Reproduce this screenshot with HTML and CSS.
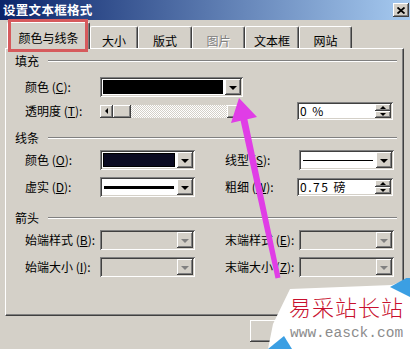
FILE: index.html
```html
<!DOCTYPE html>
<html lang="zh-CN">
<head>
    <meta charset="UTF-8">
    <title>设置文本框格式</title>
    <link rel="stylesheet" href="styles.css">
</head>
<body>
    <div class="window">
        <div class="titlebar">
            <span class="title">设置文本框格式</span>
            <span class="close">
                <svg width="8" height="7" viewBox="0 0 8 7"><path d="M0.5 0.5 L7.5 6.5 M7.5 0.5 L0.5 6.5" stroke="#000" stroke-width="1.8"/></svg>
            </span>
        </div>

        <div class="tabs">
            <div class="tab active" style="width: 83px">颜色与线条</div>
            <div class="tab" style="width: 48px">大小</div>
            <div class="tab" style="width: 54px">版式</div>
            <div class="tab disabled" style="width: 53px">图片</div>
            <div class="tab" style="width: 54px">文本框</div>
            <div class="tab" style="width: 53px">网站</div>
        </div>

        <div class="panel">
            <div class="group g-fill"><span>填充</span></div>
            <div class="row r1">
                <label>颜色 (<u>C</u>):</label>
                <div class="combo wide"><div class="value"><div class="swatch black"></div></div><span class="drop"></span></div>
            </div>
            <div class="row r2">
                <label>透明度 (<u>T</u>):</label>
                <div class="scroll">
                    <span class="sbtn left"></span>
                    <span class="thumb"></span>
                    <span class="trough"></span>
                    <span class="sbtn"></span>
                </div>
                <div class="spin"><span class="spin-text">0 %</span><span class="spin-btns"><i class="up"></i><i class="down"></i></span></div>
            </div>

            <div class="group g-line"><span>线条</span></div>
            <div class="row r3">
                <label>颜色 (<u>O</u>):</label>
                <div class="combo"><div class="value"><div class="swatch navy"></div></div><span class="drop"></span></div>
                <span></span>
                <label>线型 (<u>S</u>):</label>
                <div class="combo"><div class="value"><div class="stroke thin"></div></div><span class="drop"></span></div>
            </div>
            <div class="row r4">
                <label>虚实 (<u>D</u>):</label>
                <div class="combo"><div class="value"><div class="stroke thick"></div></div><span class="drop"></span></div>
                <span></span>
                <label>粗细 (<u>W</u>):</label>
                <div class="spin"><span class="spin-text">0.75 磅</span><span class="spin-btns"><i class="up"></i><i class="down"></i></span></div>
            </div>

            <div class="group g-arrow"><span>箭头</span></div>
            <div class="row r5">
                <label>始端样式 (<u>B</u>):</label>
                <div class="combo off"><div class="value"></div><span class="drop"></span></div>
                <span></span>
                <label>末端样式 (<u>E</u>):</label>
                <div class="combo off"><div class="value"></div><span class="drop"></span></div>
            </div>
            <div class="row r6">
                <label>始端大小 (<u>I</u>):</label>
                <div class="combo off"><div class="value"></div><span class="drop"></span></div>
                <span></span>
                <label>末端大小 (<u>Z</u>):</label>
                <div class="combo off"><div class="value"></div><span class="drop"></span></div>
            </div>
        </div>

        <!-- button captions are covered by the watermark -->
        <div class="buttons">
            <div class="btn"></div>
            <div class="btn"></div>
        </div>

        <!-- annotations drawn over the dialog -->
        <div class="mark"></div>
        <svg class="arrow" width="410" height="349" viewBox="0 0 410 349">
            <polygon fill="#e03de6" points="239,98 257,117 247.4,119.3 280.5,277.5 275.5,278.5 240.6,120.7 231,123"/>
        </svg>

        <div class="watermark">
            <svg class="wm-bg" width="160" height="71" viewBox="0 0 160 71">
                <polygon fill="#fff" points="40,11 142,7 160,0 160,71 18,71 23,46"/>
                <polygon fill="#3b9fe3" points="140,9 160,-2 160,19"/>
                <polygon fill="#3b9fe3" points="18,71 34,58 42,71"/>
            </svg>
            <div class="wm-name">易采站长站</div>
            <div class="wm-url">www.easck.com</div>
        </div>
    </div>
</body>
</html>
```

FILE: styles.css
```css
* {
    box-sizing: border-box;
}
body {
    margin: 0;
    background: #d4d0c8;
}
.window {
    position: relative;
    width: 410px;
    height: 349px;
    overflow: hidden;
    background: #d4d0c8;
    font-family: "Noto Sans CJK SC", sans-serif;
    font-size: 12px;
    color: #000;
}
u {
    text-decoration: underline;
}

/* title bar */
.titlebar {
    display: flex;
    align-items: center;
    height: 20px;
    padding: 0 1px 0 3px;
    background: linear-gradient(to right, #0a246a, #a6caf0);
}
.title {
    color: #fff;
    font-weight: bold;
    font-size: 12.5px;
    line-height: 20px;
    letter-spacing: 0.3px;
}
.close {
    margin-left: auto;
    width: 16px;
    height: 14px;
    display: flex;
    align-items: center;
    justify-content: center;
    background: #d4d0c8;
    box-shadow: inset -1px -1px #404040, inset 1px 1px #fff, inset -2px -2px #808080, inset 2px 2px #d4d0c8;
}

/* tabs */
.tabs {
    display: flex;
    align-items: flex-end;
    height: 28px;
    padding-left: 7px;
}
.tab {
    height: 22px;
    padding-top: 7px;
    line-height: 14px;
    text-align: center;
    border-top: 1px solid #fff;
    border-left: 1px solid #fff;
    border-right: 1px solid #404040;
    box-shadow: inset -1px 0 #808080;
    border-radius: 2px 2px 0 0;
}
.tab.active {
    position: relative;
    z-index: 1;
    height: 27px;
    margin-bottom: -1px;
    padding-top: 8px;
    background: #d4d0c8;
}
.tab.disabled {
    color: #808080;
    text-shadow: 1px 1px #fff;
}

/* tab page */
.panel {
    height: 268px;
    margin: 0 6px 0 5px;
    border-top: 1px solid #fff;
    border-left: 1px solid #fff;
    border-right: 1px solid #404040;
    border-bottom: 1px solid #404040;
    box-shadow: inset -1px -1px #808080;
}
.group {
    display: flex;
    align-items: center;
    height: 14px;
    line-height: 14px;
    margin: 0 6px 0 9px;
}
.group::after {
    content: "";
    flex: 1;
    margin-left: 9px;
    border-top: 1px solid #808080;
    border-bottom: 1px solid #fff;
}
.g-fill { margin-top: 5px; }
.g-line { margin-top: 10px; }
.g-arrow { margin-top: 14px; }

.row {
    display: grid;
    grid-template-columns: 75px 95px 30px 74px 95px;
    align-items: center;
    height: 20px;
    margin-left: 19px;
}
.r1 { margin-top: 9px; }
.r2 { margin-top: 4px; }
.r3 { margin-top: 5px; }
.r4 { margin-top: 7px; }
.r5 { margin-top: 5px; }
.r6 { margin-top: 7px; }
.row label {
    line-height: 20px;
    white-space: nowrap;
}

/* combo boxes */
.combo {
    display: flex;
    height: 20px;
    padding: 2px;
    background: #fff;
    box-shadow: inset 1px 1px #808080, inset -1px -1px #fff, inset 2px 2px #404040, inset -2px -2px #d4d0c8;
}
.combo.wide {
    width: 143px;
    grid-column: 2 / 5;
}
.combo.off {
    background: #d4d0c8;
}
.value {
    flex: 1;
    display: flex;
    align-items: center;
    padding: 1px 2px 1px 1px;
}
.swatch {
    width: 100%;
    height: 100%;
}
.swatch.black {
    background: #000;
}
.swatch.navy {
    background: #0b0b22;
    border: 1px solid #000;
}
.stroke {
    width: 100%;
    margin: 0 1px;
    background: #000;
}
.stroke.thin { height: 1px; }
.stroke.thick { height: 3px; }

.drop {
    width: 16px;
    height: 16px;
    display: flex;
    align-items: center;
    justify-content: center;
    background: #d4d0c8;
    box-shadow: inset -1px -1px #404040, inset 1px 1px #fff, inset -2px -2px #808080, inset 2px 2px #d4d0c8;
}
.drop::before {
    content: "";
    border-style: solid;
    border-width: 4px 4px 0;
    border-color: #000 transparent transparent;
    margin-top: 1px;
}
.combo.off .drop::before {
    border-top-color: #808080;
}

/* trackbar */
.scroll {
    grid-column: 2 / 5;
    display: flex;
    width: 140px;
    height: 13px;
}
.sbtn, .thumb {
    width: 13px;
    display: flex;
    align-items: center;
    justify-content: center;
    background: #d4d0c8;
    box-shadow: inset -1px -1px #404040, inset 1px 1px #fff, inset -2px -2px #808080, inset 2px 2px #d4d0c8;
}
.thumb {
    width: 18px;
}
.sbtn.left::before {
    content: "";
    border-style: solid;
    border-width: 3px 3px 3px 0;
    border-color: transparent #000 transparent transparent;
}
.trough {
    flex: 1;
    background: repeating-conic-gradient(#fff 0 25%, #d4d0c8 0 50%) 0 0 / 2px 2px;
}

/* spin boxes */
.spin {
    display: flex;
    width: 96px;
    height: 18px;
    margin-left: -2px;
    padding: 2px;
    background: #fff;
    box-shadow: inset 1px 1px #808080, inset -1px -1px #fff, inset 2px 2px #404040, inset -2px -2px #d4d0c8;
}
.spin-text {
    flex: 1;
    line-height: 14px;
    padding-left: 1px;
    letter-spacing: 1.5px;
    white-space: nowrap;
}
.spin-btns {
    display: flex;
    flex-direction: column;
    width: 16px;
}
.spin-btns i {
    flex: 1;
    display: flex;
    align-items: center;
    justify-content: center;
    background: #d4d0c8;
    box-shadow: inset -1px -1px #404040, inset 1px 1px #fff, inset -2px -2px #808080, inset 2px 2px #d4d0c8;
}
.spin-btns i::before {
    content: "";
    border-style: solid;
    border-color: transparent;
}
.spin-btns .up::before {
    border-width: 0 3px 3px;
    border-bottom-color: #000;
}
.spin-btns .down::before {
    border-width: 3px 3px 0;
    border-top-color: #000;
}

/* dialog buttons */
.buttons {
    display: flex;
    gap: 6px;
    margin-top: 4px;
    padding-left: 250px;
}
.btn {
    width: 75px;
    height: 22px;
    background: #d4d0c8;
    box-shadow: inset -1px -1px #404040, inset 1px 1px #fff, inset -2px -2px #808080, inset 2px 2px #d4d0c8;
}

/* overlays */
.mark {
    position: absolute;
    left: 8px;
    top: 19px;
    width: 80px;
    height: 33px;
    border: 3px solid #d65a5c;
    z-index: 2;
}
.arrow {
    position: absolute;
    left: 0;
    top: 0;
    z-index: 3;
}
.watermark {
    position: absolute;
    left: 250px;
    top: 278px;
    width: 160px;
    height: 71px;
    z-index: 4;
}
.wm-bg {
    position: absolute;
    left: 0;
    top: 0;
}
.wm-name {
    position: relative;
    margin: 15px 0 0 39px;
    font-size: 22px;
    font-weight: 300;
    line-height: 26px;
    letter-spacing: 1px;
    color: #c8102e;
    white-space: nowrap;
}
.wm-url {
    position: relative;
    margin: 6px 0 0 40px;
    font-family: "Liberation Mono", monospace;
    font-size: 14.5px;
    line-height: 16px;
    color: #8c8c8c;
    white-space: nowrap;
}
```
